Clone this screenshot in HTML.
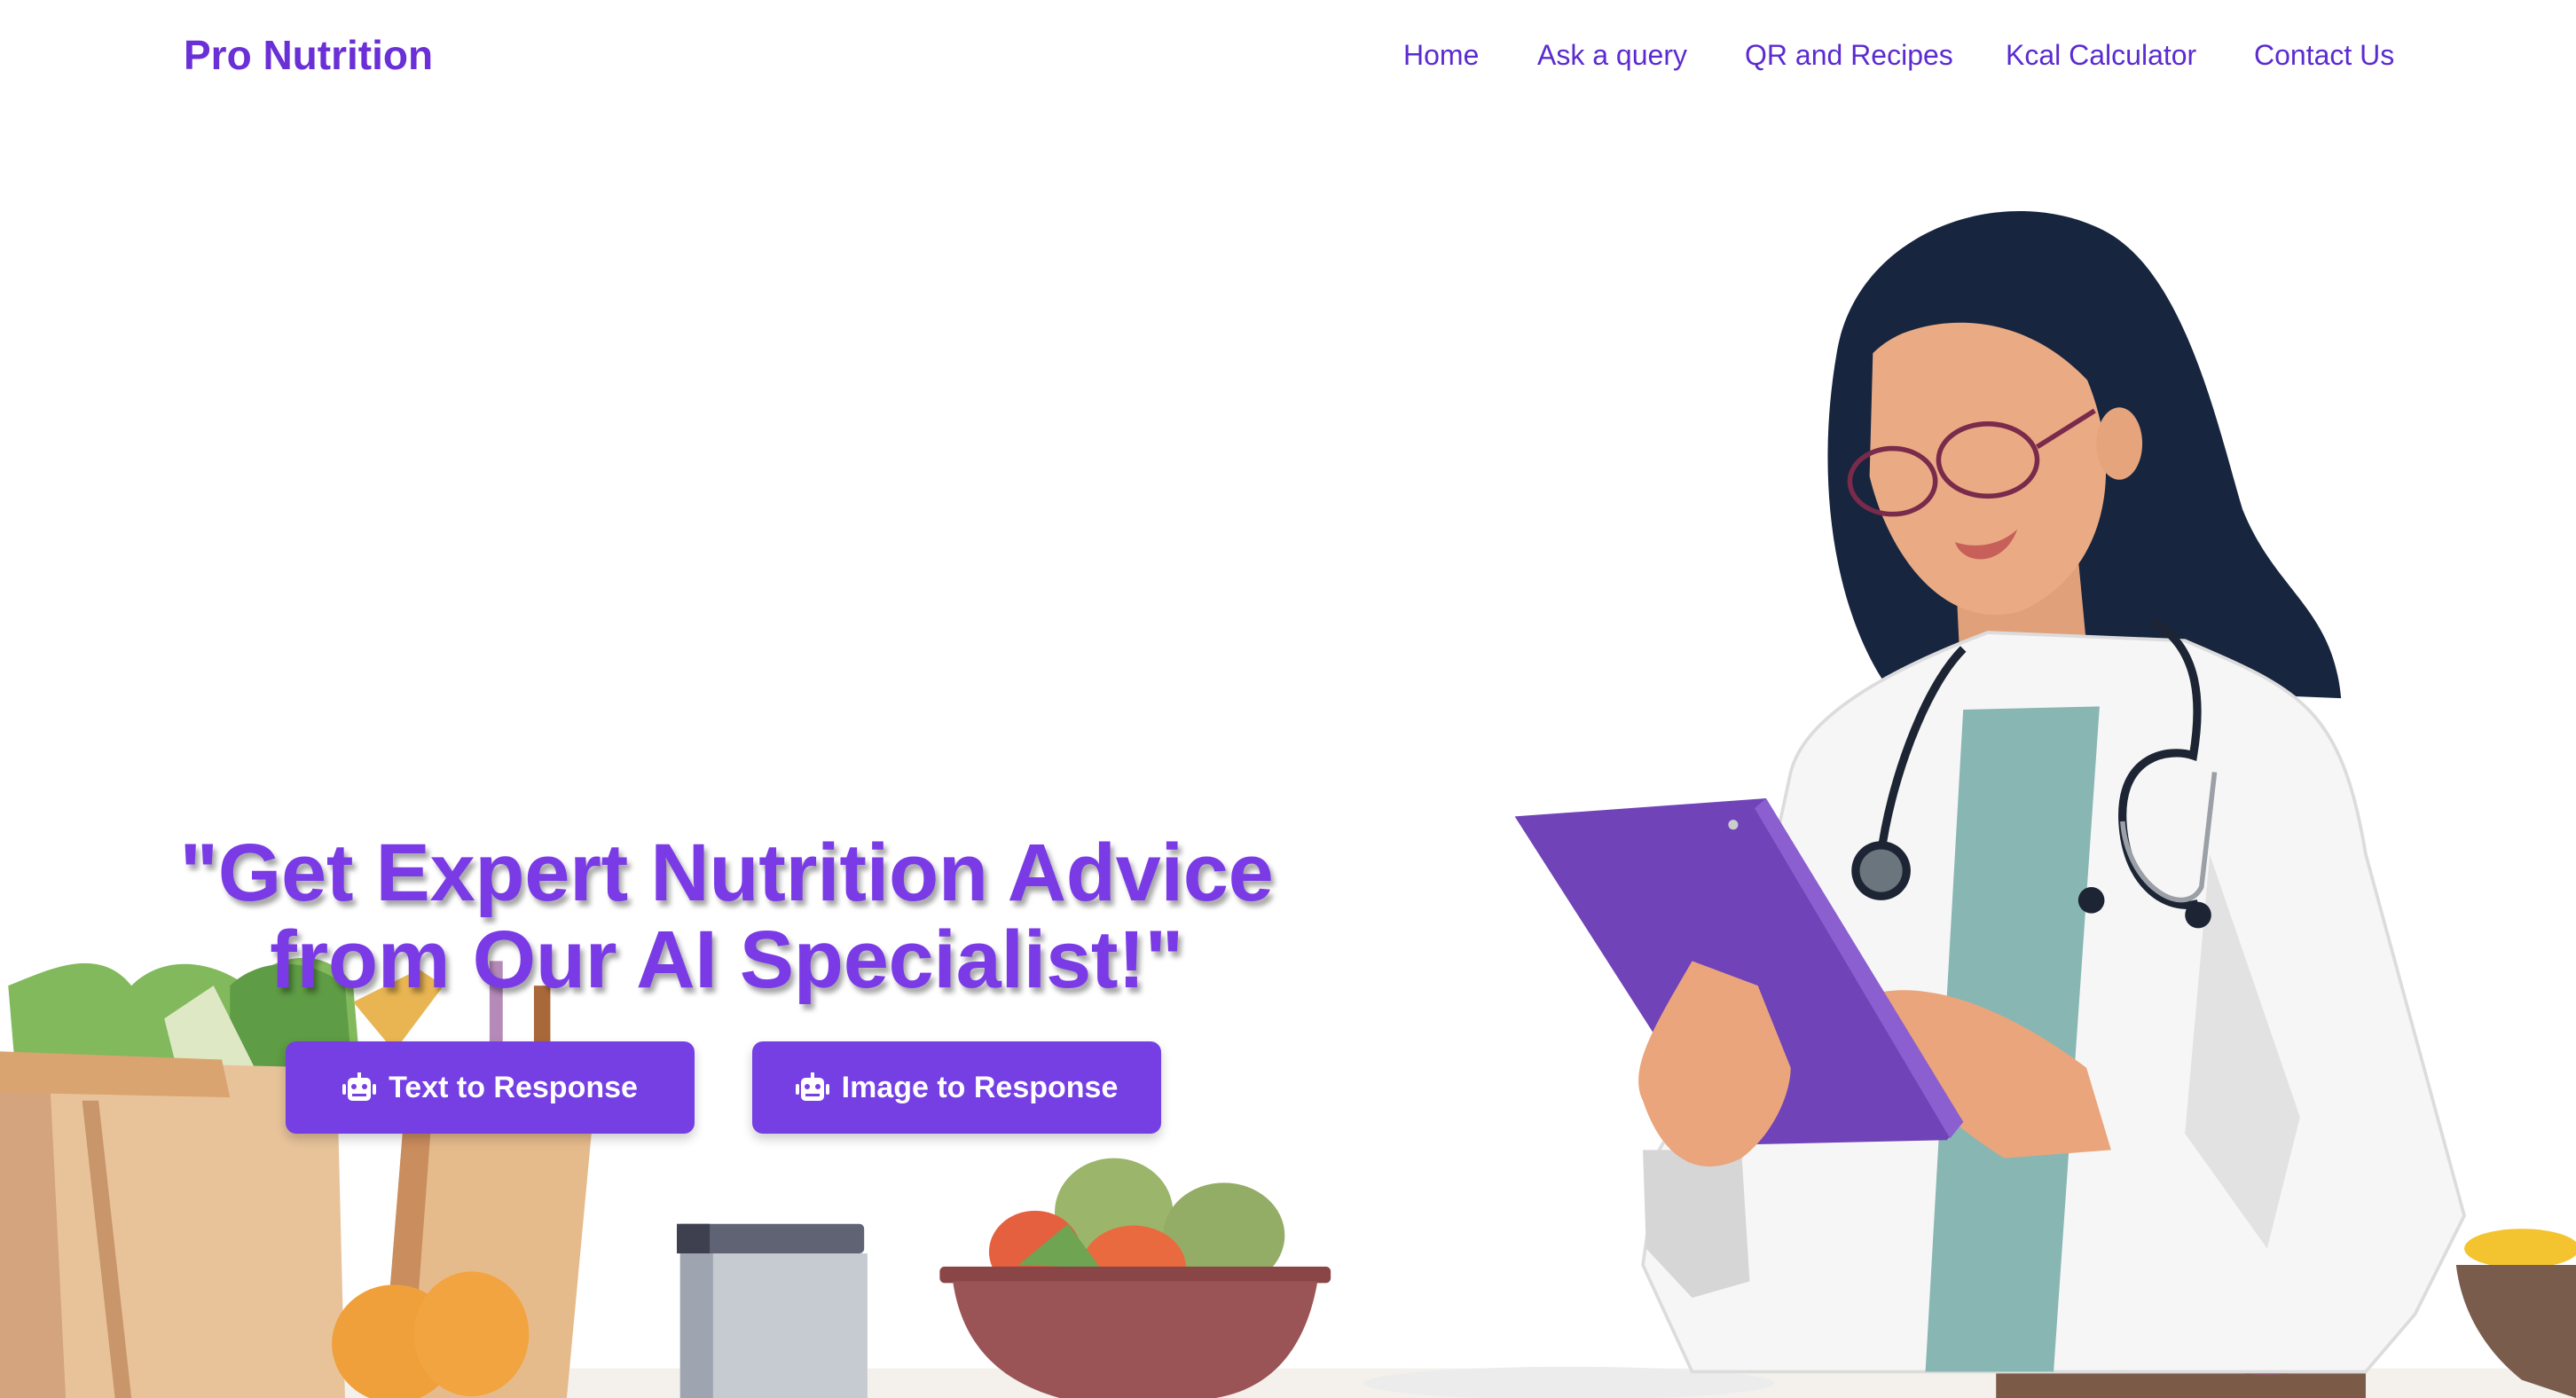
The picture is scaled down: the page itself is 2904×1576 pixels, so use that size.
<!DOCTYPE html>
<html><head><meta charset="utf-8">
<style>
html,body{margin:0;padding:0;width:2904px;height:1576px;overflow:hidden;background:#fff;font-family:"Liberation Sans",sans-serif;}
.abs{position:absolute;}
.logo{left:207px;top:35px;font-size:46px;font-weight:bold;color:#6a2fd6;}
.nav{top:44px;font-size:32px;color:#5b2bd0;}
.h1{left:144px;width:1350px;top:935px;text-align:center;font-size:92px;font-weight:bold;line-height:98px;color:#7a3be6;text-shadow:4px 6px 6px rgba(0,0,0,0.35);letter-spacing:-0.3px;}
.btn{top:1174px;height:104px;background:#753fe3;border-radius:12px;color:#fff;font-size:34px;font-weight:bold;display:flex;align-items:center;justify-content:center;box-shadow:0 6px 12px rgba(0,0,0,0.2);}
.btn svg{margin-right:14px;}
</style></head><body>
<svg class="abs" style="left:0;top:0" width="2904" height="1576" viewBox="0 0 1568 851" preserveAspectRatio="none">
<rect x="0" y="833" width="1568" height="18" fill="#f4f1ec"/>
<path d="M5,600 C30,590 60,575 80,600 C100,580 130,585 150,600 C165,580 200,575 215,600 L220,660 L10,660 Z" fill="#82b95c"/>
<path d="M140,600 C155,585 185,580 210,600 L215,660 L140,660 Z" fill="#5e9c45"/>
<path d="M100,620 L130,600 L160,660 L110,660Z" fill="#dfe8c5"/>
<path d="M215,610 L255,590 L270,600 L240,640 Z" fill="#e8b552"/>
<rect x="298" y="585" width="8" height="70" fill="#b58ab8"/>
<rect x="325" y="600" width="10" height="55" fill="#a8683a"/>
<path d="M0,645 L205,650 L210,851 L20,851 Z" fill="#e8c39a"/>
<path d="M0,645 L30,650 L40,851 L15,851 L0,851Z" fill="#d3a47e"/>
<path d="M0,640 L135,645 L140,668 L0,665Z" fill="#d9a470"/>
<path d="M60,670 L80,851 L70,851 L50,670Z" fill="#c9956a"/>
<path d="M245,690 L360,690 L345,851 L232,851 Z" fill="#e6bb8c"/>
<path d="M245,690 L262,690 L250,851 L232,851Z" fill="#c98d5e"/>
<ellipse cx="240" cy="818" rx="38" ry="36" fill="#f0a03a"/>
<ellipse cx="287" cy="812" rx="35" ry="38" fill="#f2a440"/>
<rect x="412" y="745" width="114" height="18" rx="3" fill="#5f6373"/>
<rect x="412" y="745" width="20" height="18" fill="#3e4050"/>
<path d="M414,763 L528,763 L528,851 L414,851Z" fill="#c6cad1"/>
<rect x="414" y="763" width="20" height="88" fill="#9ea4b0"/>
<ellipse cx="678" cy="738" rx="36" ry="33" fill="#9bb56b"/>
<ellipse cx="745" cy="752" rx="37" ry="32" fill="#93ad66"/>
<ellipse cx="630" cy="762" rx="28" ry="25" fill="#e5603f"/>
<ellipse cx="690" cy="772" rx="32" ry="26" fill="#ea6a40"/>
<path d="M620,770 L650,745 L670,772Z" fill="#6fa452"/>
<rect x="572" y="771" width="238" height="10" rx="3" fill="#8a4646"/>
<path d="M580,780 L802,780 C795,820 775,845 740,851 L645,851 C605,840 585,815 580,780Z" fill="#9a5455"/>
<ellipse cx="955" cy="842" rx="125" ry="10" fill="#ececec"/>
<rect x="1215" y="836" width="225" height="15" fill="#7b5a48"/>
<ellipse cx="1290" cy="826" rx="45" ry="10" fill="#f3c050"/>
<ellipse cx="1380" cy="826" rx="32" ry="11" fill="#8c5a6a"/>
<rect x="1318" y="800" width="56" height="22" fill="none" stroke="#bbb" stroke-width="1"/>
<ellipse cx="1535" cy="760" rx="35" ry="12" fill="#f4c430"/>
<path d="M1495,770 L1568,770 L1568,851 L1535,840 C1510,820 1498,795 1495,770Z" fill="#7a5c4c"/>
<path d="M1118,215 C1130,140 1220,110 1280,140 C1330,165 1350,260 1365,310 C1385,360 1420,370 1425,425 L1300,420 L1150,420 C1115,370 1105,290 1118,215Z" fill="#17253f"/>
<path d="M1190,340 L1265,340 L1275,445 L1195,445Z" fill="#e0a07a"/>
<path d="M1140,215 C1170,185 1240,190 1270,230 C1295,290 1280,350 1230,372 C1185,385 1150,340 1138,290Z" fill="#eaab84"/>
<ellipse cx="1290" cy="270" rx="14" ry="22" fill="#e6a47d"/>
<path d="M1128,222 C1160,190 1230,180 1278,240 L1270,205 C1230,170 1160,175 1128,222Z" fill="#17253f"/>
<ellipse cx="1152" cy="293" rx="26" ry="20" fill="none" stroke="#7a2a4a" stroke-width="3"/>
<ellipse cx="1210" cy="280" rx="30" ry="22" fill="none" stroke="#7a2a4a" stroke-width="3"/>
<line x1="1240" y1="272" x2="1275" y2="250" stroke="#7a2a4a" stroke-width="3"/>
<path d="M1190,330 C1205,335 1220,330 1228,322 C1220,345 1195,345 1190,330Z" fill="#c8605a"/>
<path d="M1090,470 C1100,430 1170,400 1210,385 L1330,390 C1400,420 1425,430 1440,520 L1500,740 L1470,800 L1440,835 L1030,835 L1000,770 L1010,700 L1060,610 Z" fill="#f6f6f6" stroke="#dcdcdc" stroke-width="2"/>
<path d="M1195,432 L1278,430 L1250,835 L1172,835Z" fill="#88b6b3"/>
<path d="M1000,700 L1060,700 L1065,780 L1030,790 L1002,760Z" fill="#d6d6d6"/>
<path d="M1345,520 L1400,680 L1380,760 L1330,690Z" fill="#e2e2e2"/>
<path d="M1195,395 C1170,420 1150,480 1145,520" fill="none" stroke="#1d2535" stroke-width="5"/>
<circle cx="1145" cy="530" r="18" fill="#1d2535"/><circle cx="1145" cy="530" r="13" fill="#6b757d"/>
<path d="M1310,378 C1340,395 1340,430 1335,460 C1320,455 1290,460 1292,500 C1294,540 1320,555 1338,550" fill="none" stroke="#1d2535" stroke-width="5"/>
<path d="M1292,500 C1295,540 1330,560 1340,540 L1348,470" fill="none" stroke="#9aa0a6" stroke-width="3"/>
<circle cx="1273" cy="548" r="8" fill="#1d2535"/><circle cx="1338" cy="557" r="8" fill="#1d2535"/>
<path d="M1140,605 C1180,595 1230,620 1270,650 L1285,700 L1220,705 C1180,680 1150,650 1140,605Z" fill="#eaa57c"/>
<path d="M922,497 L1075,486 L1195,683 L1185,694 L1050,697 Z" fill="#7043b8"/>
<path d="M1075,486 L1195,683 L1187,693 L1068,492Z" fill="#8b5fd0"/>
<circle cx="1055" cy="502" r="3" fill="#ccc"/>
<path d="M1030,585 C1010,620 990,650 1000,670 C1010,700 1030,720 1060,705 C1080,690 1090,665 1090,650 L1070,600Z" fill="#eaa57c"/>
</svg>

<div class="abs logo">Pro Nutrition</div>
<div class="abs nav" style="left:1582px">Home</div>
<div class="abs nav" style="left:1733px">Ask a query</div>
<div class="abs nav" style="left:1967px">QR and Recipes</div>
<div class="abs nav" style="left:2261px">Kcal Calculator</div>
<div class="abs nav" style="left:2541px">Contact Us</div>

<div class="abs h1">"Get Expert Nutrition Advice<br>from Our AI Specialist!"</div>

<div class="abs btn" style="left:322px;width:461px;">
<svg width="38" height="34" viewBox="0 0 38 34"><rect x="17" y="0" width="4" height="7" fill="#fff"/><rect x="6" y="6" width="26" height="26" rx="5" fill="#fff"/><rect x="0" y="13" width="4" height="12" rx="2" fill="#fff"/><rect x="34" y="13" width="4" height="12" rx="2" fill="#fff"/><circle cx="13" cy="16" r="3" fill="#753fe3"/><circle cx="25" cy="16" r="3" fill="#753fe3"/><rect x="11" y="24" width="16" height="3" fill="#753fe3"/></svg>Text to Response</div>
<div class="abs btn" style="left:848px;width:461px;">
<svg width="38" height="34" viewBox="0 0 38 34"><rect x="17" y="0" width="4" height="7" fill="#fff"/><rect x="6" y="6" width="26" height="26" rx="5" fill="#fff"/><rect x="0" y="13" width="4" height="12" rx="2" fill="#fff"/><rect x="34" y="13" width="4" height="12" rx="2" fill="#fff"/><circle cx="13" cy="16" r="3" fill="#753fe3"/><circle cx="25" cy="16" r="3" fill="#753fe3"/><rect x="11" y="24" width="16" height="3" fill="#753fe3"/></svg>Image to Response</div>
</body></html>
